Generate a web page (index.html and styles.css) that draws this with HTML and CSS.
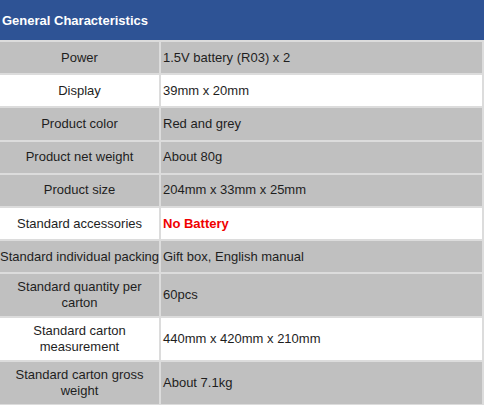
FILE: index.html
```html
<!DOCTYPE html>
<html>
<head>
<meta charset="utf-8">
<link rel="stylesheet" href="styles.css">
</head>
<body>
<div class="sheet">
  <div class="title">General Characteristics</div>
  <div class="specs">
    <div class="row grey"><div class="key">Power</div><div class="val">1.5V battery (R03) x 2</div></div>
    <div class="row white"><div class="key">Display</div><div class="val">39mm x 20mm</div></div>
    <div class="row grey"><div class="key">Product color</div><div class="val">Red and grey</div></div>
    <div class="row grey"><div class="key">Product net weight</div><div class="val">About 80g</div></div>
    <div class="row grey"><div class="key">Product size</div><div class="val">204mm x 33mm x 25mm</div></div>
    <div class="row white"><div class="key">Standard accessories</div><div class="val red">No Battery</div></div>
    <div class="row grey"><div class="key">Standard individual packing</div><div class="val">Gift box, English manual</div></div>
    <div class="row grey tall"><div class="key">Standard quantity per carton</div><div class="val">60pcs</div></div>
    <div class="row white tall"><div class="key">Standard carton measurement</div><div class="val">440mm x 420mm x 210mm</div></div>
    <div class="row grey tall"><div class="key">Standard carton gross weight</div><div class="val">About 7.1kg</div></div>
  </div>
</div>
</body>
</html>
```
FILE: styles.css
```css
html, body {
  margin: 0;
  padding: 0;
  background: #ffffff;
}
.sheet {
  width: 484px;
  font-family: "Liberation Sans", Arial, sans-serif;
  font-size: 13px;
  color: #1e1e1e;
}
.title {
  height: 40px;
  background: #2e5395;
  color: #ffffff;
  font-weight: bold;
  display: flex;
  align-items: center;
  padding-left: 2px;
  box-sizing: border-box;
}
.specs {
  display: flex;
  flex-direction: column;
  gap: 2px;
  padding: 2px 2px 2px 0;
  background: #dcdcdc;
}
.row {
  display: grid;
  grid-template-columns: 159px 1fr;
  column-gap: 2px;
  height: 31.2px;
  line-height: 16px;
}
.row.tall {
  height: 42px;
}
.key, .val {
  display: flex;
  align-items: center;
}
.key {
  justify-content: center;
  text-align: center;
}
.val {
  padding-left: 2px;
}
.grey .key, .grey .val {
  background: #c0c0c0;
}
.white .key, .white .val {
  background: #ffffff;
}
.red {
  color: #f00000;
  font-weight: bold;
}
```
